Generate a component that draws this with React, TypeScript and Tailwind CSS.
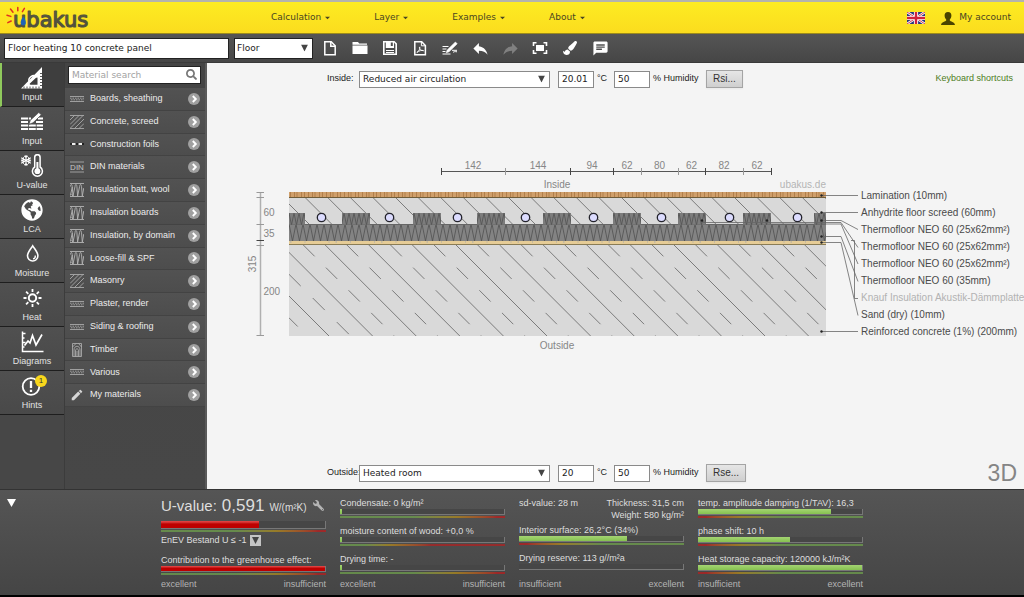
import React from "react";
import { FaGlobeAmericas, FaPaintBrush, FaSearch, FaWrench } from "react-icons/fa";
import { MdChat, MdEdit, MdReply } from "react-icons/md";

const verdana = "font-['DejaVu_Sans',Verdana,sans-serif]";

/* ---------- Header ---------- */

function Logo() {
  return (
    <svg viewBox="0 0 86 26" className="h-[26px] w-[86px]" role="img" aria-label="ubakus">
      <g stroke="#e03020" strokeWidth="1.5" strokeLinecap="round">
        <path d="M1 10.200 4.800 11.400M4.500 4 7 7.200M11.800 2.400v3.400M18.400 3.400 16.400 6.600M1.800 17.600l3.400-1.600" />
      </g>
      <defs>
        <linearGradient id="logoFill" x1="0" y1="0" x2="0" y2="1">
          <stop offset="0" stopColor="#6b6a45" />
          <stop offset="1" stopColor="#3f3f3a" />
        </linearGradient>
      </defs>
      <text
        x="7"
        y="21.500"
        fontFamily="DejaVu Sans"
        fontSize="21"
        fill="url(#logoFill)"
        stroke="#55543c"
        strokeWidth="1.200"
        strokeLinejoin="round"
      >
        ubakus
      </text>
      <path d="M17.400 11.600c-3.600 4.200-3.800 9 .2 9 3.400-.6 2.600-4.800-.2-9z" fill="#1f63b5" />
    </svg>
  );
}

function Flag() {
  return (
    <svg viewBox="0 0 60 40" className="h-3 w-[18px]" aria-hidden="true">
      <path fill="#26377d" d="M0 0h60v40H0z" />
      <path d="M0 0l60 40M60 0L0 40" stroke="#fff" strokeWidth="8" />
      <path d="M0 0l60 40M60 0L0 40" stroke="#c8203c" strokeWidth="3" />
      <path d="M30 0v40M0 20h60" stroke="#fff" strokeWidth="14" />
      <path d="M30 0v40M0 20h60" stroke="#d0223c" strokeWidth="8" />
    </svg>
  );
}

function Header() {
  return (
    <header
      className={`flex h-[34px] items-center border-t-2 border-b border-t-[#b4b4ac] border-b-[#9c8a1c] bg-linear-to-b from-[#fdec22] to-[#fbdc1e] pt-px pr-[13px] text-[9px] text-[#4a4520] ${verdana}`}
    >
      <a href="#home" className="ml-1.5">
        <Logo />
      </a>
      <nav className="ml-[179px] flex gap-11">
        {["Calculation", "Layer", "Examples", "About"].map((item) => (
          <a key={item} href={`#${item.toLowerCase()}`} className="flex items-center gap-1">
            {item}
            <svg viewBox="0 0 6 4" className="h-1 w-[5px]" aria-hidden="true">
              <path d="M0 .4h6L3 3.600z" fill="currentColor" />
            </svg>
          </a>
        ))}
      </nav>
      <a href="#language" aria-label="English" className="ml-auto">
        <Flag />
      </a>
      <a href="#account" className="ml-4 flex items-center gap-1">
        <svg viewBox="0 0 14 13" className="h-[13px] w-3.5" aria-hidden="true">
          <path
            d="M7 0c2.300 0 3.600 1.500 3.400 3.700-.1 1.700-.8 2.900-1.600 3.700v1.100c.4 1 4.900 1.200 5.200 4.500H0c.3-3.300 4.800-3.500 5.200-4.500V7.400C4.400 6.600 3.700 5.400 3.600 3.700 3.400 1.500 4.700 0 7 0z"
            fill="#4a4300"
          />
        </svg>
        My account
      </a>
    </header>
  );
}

/* ---------- Toolbar ---------- */

const tools: { name: string; icon: React.ReactNode }[] = [
  {
    name: "New",
    icon: (
      <svg viewBox="0 0 16 16" className="size-4" fill="none" stroke="currentColor" strokeWidth="1.5">
        <path d="M2.800 1.800h6.400l4 4v8.900H2.800z" />
        <path d="M8.800 2v4.200h4.200" />
      </svg>
    ),
  },
  {
    name: "Open",
    icon: (
      <svg viewBox="0 0 16 16" className="size-4" fill="currentColor">
        <path d="M.5 2h5.500l1.200 1.400H15v1.300H.5zM.5 5.600h15V14H.5z" />
      </svg>
    ),
  },
  {
    name: "Save",
    icon: (
      <svg viewBox="0 0 16 16" className="size-4">
        <path
          fill="currentColor"
          fillRule="evenodd"
          d="M1 1h11.500L15 3.500V15H1zM2.600 2.600v10.800h10.800V4.200L12 2.600V8H3.800V2.600zM4 10h8v1H4zm0 2h8v1H4zM8.800 2.400V6h2V2.400z"
        />
      </svg>
    ),
  },
  {
    name: "PDF",
    icon: (
      <svg viewBox="0 0 16 16" className="size-4" fill="none" stroke="currentColor">
        <path d="M2.800 1.800h6.900l3.700 3.700v9.200H2.800z" strokeWidth="1.500" />
        <path d="M9.400 2v3.800h3.800" />
        <path d="M4.800 12.500c2-1 3.600-4 3-5.600-1.300 1 .8 4 3.800 3.800-1.500-.9-4.800.1-6.800 1.800z" strokeWidth=".9" />
      </svg>
    ),
  },
  {
    name: "Edit layers",
    icon: (
      <svg viewBox="0 0 16 16" className="size-4" stroke="currentColor">
        <path d="M.5 6.500h6M.5 9h4M.5 11.500h3M.5 14h8M11 12.500c1-1 2-1 4-.7M10 10.300h5" strokeWidth="1" fill="none" />
        <path d="M13.400 2l1.800 1.800-8.200 8-2.800 1 1-2.800z" fill="currentColor" strokeWidth=".6" />
      </svg>
    ),
  },
  { name: "Undo", icon: <MdReply className="size-[19px]" /> },
  { name: "Redo", icon: <MdReply className="size-[19px] -scale-x-100 text-[#808080]" /> },
  {
    name: "Fit to screen",
    icon: (
      <svg viewBox="0 0 16 16" className="size-4">
        <path d="M4 5h8v6H4z" fill="currentColor" />
        <path d="M1.500 6V2.700h3M11.500 2.700h3V6M14.500 10v3.300h-3M4.500 13.300h-3V10" fill="none" stroke="currentColor" strokeWidth="1.600" />
      </svg>
    ),
  },
  {
    name: "Appearance",
    icon: <FaPaintBrush className="size-3.5" />,
  },
  { name: "Comment", icon: <MdChat className="size-[17px]" /> },
];

function Arrow() {
  return (
    <svg viewBox="0 0 7 7" className="pointer-events-none absolute top-1/2 right-[5px] size-[7px] -translate-y-1/2" aria-hidden="true">
      <path d="M0 0h7L3.500 7z" fill="#444" />
    </svg>
  );
}

function Toolbar() {
  return (
    <div className={`flex h-[29px] items-center border-b border-[#3a3a3a] bg-linear-to-b from-[#555] to-[#464646] pl-1 ${verdana}`}>
      <input
        aria-label="Project name"
        defaultValue="Floor heating 10 concrete panel"
        className="h-[21px] w-[225px] border border-[#222] bg-white px-[3px] text-[9px] text-[#222]"
      />
      <div className="relative ml-[5px]">
        <select
          aria-label="Component type"
          className="block h-[21px] w-[79px] appearance-none border border-[#222] bg-white px-0.5 pt-0.5 text-[9px] text-[#222]"
        >
          <option>Floor</option>
        </select>
        <Arrow />
      </div>
      <div className="ml-0.5 flex text-white">
        {tools.map((t) => (
          <button key={t.name} type="button" aria-label={t.name} className="flex h-6 w-[30px] items-center justify-center">
            {t.icon}
          </button>
        ))}
      </div>
    </div>
  );
}

/* ---------- Section navigation ---------- */

const sections: { name: string; icon: React.ReactNode; badge?: string }[] = [
  {
    name: "Input",
    icon: (
      <svg viewBox="0 0 24 24" className="size-6">
        <path
          fill="#fff"
          fillRule="evenodd"
          d="M22 1v21.500H1zM17.500 12v6.800h-7c-.6 0-1.200-.6-.6-1.200l6.400-6.200c.6-.5 1.200-.1 1.200.6z"
        />
        <path d="M9.500 16.500a4.600 4.600 0 0 1 7.500-5.200" fill="none" stroke="#fff" strokeWidth="1.500" />
        <path d="M4 22.500v-2M7 22.500v-2M10 22.500v-2M13 22.500v-2M16 22.500v-2M19 22.500v-2M22 19.500h-2M22 16.500h-2M22 13.500h-2M22 10.500h-2M22 7.500h-2" stroke="#444" strokeWidth=".9" />
      </svg>
    ),
  },
  {
    name: "Input",
    icon: (
      <svg viewBox="0 0 24 24" className="size-6">
        <path d="M1 8.500h10M18 8.500h5M1 12h7M16 12h7M1 15.500h22M1 19h22" stroke="#fff" strokeWidth="1.900" strokeDasharray="7 .8" />
        <path d="M18.800 2.500l2.500 2.300-8.300 8-4 1.500 1.300-4z" fill="#fff" stroke="#4b4b4b" strokeWidth=".7" />
      </svg>
    ),
  },
  {
    name: "U-value",
    icon: (
      <svg viewBox="0 0 24 24" className="size-6" fill="none" stroke="#fff">
        <path d="M6 1v11M1.200 3.800l9.600 5.400M1.200 9.200l9.600-5.400M4.300 1.800 6 3.500l1.700-1.700M4.300 11.200 6 9.500l1.700 1.700M1.200 6l2 .2.300-3M10.800 7l-2-.3-.3 3M1.200 7l2-.3.300 3M10.800 6l-2 .2-.3-3" strokeWidth="1.100" />
        <path d="M14.700 13V3.400a2.700 2.700 0 0 1 5.400 0V13a5 5 0 1 1-5.400 0z" strokeWidth="1.500" />
        <path d="M17.400 8v9" strokeWidth="2" />
        <circle cx="17.400" cy="17.200" r="2.900" fill="#fff" stroke="none" />
      </svg>
    ),
  },
  { name: "LCA", icon: <FaGlobeAmericas className="size-[22px] text-white" /> },
  {
    name: "Moisture",
    icon: (
      <svg viewBox="0 0 24 24" className="size-6" fill="none" stroke="#fff">
        <path d="M12.700 3.800c-2.500 4-5.200 6.500-5.200 10a5.200 5.200 0 0 0 10.400 0c0-3.500-2.700-6-5.200-10z" strokeWidth="1.600" />
        <path d="M15.300 13.500c.2 2-.8 3.200-2.300 3.400" strokeWidth="1.300" />
      </svg>
    ),
  },
  {
    name: "Heat",
    icon: (
      <svg viewBox="0 0 24 24" className="size-6" fill="none" stroke="#fff" strokeWidth="2">
        <circle cx="12.500" cy="12" r="3.700" />
        <path d="M12.500 3v3M12.500 18v3M3.500 12h3M18.500 12h3M6.100 5.600l2.200 2.200M16.700 16.200l2.200 2.200M6.100 18.400l2.200-2.200M16.700 7.800l2.200-2.200" strokeWidth="1.800" />
      </svg>
    ),
  },
  {
    name: "Diagrams",
    icon: (
      <svg viewBox="0 0 24 24" className="size-6" fill="none" stroke="#fff">
        <path d="M2.500 1.500v20h21M2.500 3.500h3M2.500 8h2M2.500 12.500h3M2.500 17h2" strokeWidth="1.500" />
        <path d="M4.500 15.500 8 11l2 2 2.500-7.500 3.500 9.500 6-10.500" strokeWidth="1.700" />
      </svg>
    ),
  },
  {
    name: "Hints",
    badge: "1",
    icon: (
      <svg viewBox="0 0 24 24" className="size-6" fill="none" stroke="#fff">
        <circle cx="11" cy="12.500" r="8.300" strokeWidth="1.800" />
        <path d="M11 7v7M11 15.800v2.200" strokeWidth="2.300" />
      </svg>
    ),
  },
];

function SectionNav() {
  return (
    <nav className="w-16 shrink-0 bg-[#474747]">
      {sections.map((s, i) => (
        <a
          key={i}
          href={`#section-${i}`}
          className={`flex h-11 flex-col items-center border-b border-[#1e1e1e] pt-0.5 text-[9px] leading-3 text-[#e2e2e2] ${
            i === 0 ? "border-l-2 border-l-[#8fc95c] bg-[#3e3e3e] pr-0.5" : "bg-linear-to-b from-[#505050] to-[#494949]"
          }`}
        >
          <span className="relative flex h-[26px] items-center">
            {s.icon}
            {s.badge && (
              <span className="absolute top-0.5 -right-[3px] flex size-3 items-center justify-center rounded-full bg-[#f8d71c] text-[8px] leading-none text-[#333]">
                {s.badge}
              </span>
            )}
          </span>
          {s.name}
        </a>
      ))}
    </nav>
  );
}

/* ---------- Material list ---------- */

type Swatch = "board" | "hatch" | "foil" | "din" | "wool" | "timber" | "pencil";

const materials: [string, Swatch][] = [
  ["Boards, sheathing", "board"],
  ["Concrete, screed", "hatch"],
  ["Construction foils", "foil"],
  ["DIN materials", "din"],
  ["Insulation batt, wool", "wool"],
  ["Insulation boards", "wool"],
  ["Insulation, by domain", "wool"],
  ["Loose-fill & SPF", "wool"],
  ["Masonry", "hatch"],
  ["Plaster, render", "board"],
  ["Siding & roofing", "board"],
  ["Timber", "timber"],
  ["Various", "board"],
  ["My materials", "pencil"],
];

function MaterialIcon({ kind }: { kind: Swatch }) {
  if (kind === "pencil") return <MdEdit className="size-3.5 text-[#d5d5d5]" />;
  return (
    <svg viewBox="0 0 14 14" className="size-3.5" fill="none" stroke="#b4b4b4" strokeWidth=".8" aria-hidden="true">
      {kind === "board" && (
        <>
          <path d="M0 4.500h14M0 9.500h14" />
          <path d="M0 6.200h14M1 7.800h13" strokeDasharray="1.500 1" />
        </>
      )}
      {kind === "hatch" && <path d="M0 .5h14M0 13.500h14M0 5l4.500-4.500M0 9.500l9-9M0 13.500l13-13M4.500 13.500l9.500-9.500M9 13.500l5-5" />}
      {kind === "foil" && (
        <>
          <path d="M0 7h14" stroke="#222" strokeWidth="2" />
          <path d="M2 7h3.500M8.500 7h3.500" stroke="#eee" strokeWidth="2" />
        </>
      )}
      {kind === "din" && (
        <>
          <path d="M0 2h14M0 12h14" />
          <text x="7" y="10.300" textAnchor="middle" fontFamily="Liberation Sans" fontSize="8" fill="#c4c4c4" stroke="none">
            DIN
          </text>
        </>
      )}
      {kind === "wool" && (
        <path
          d="M0 .5h14M0 13.500h14M.4 3.500C.6.800 2 .8 2.200 3.500L3 13l2-9.500c.3-2.700 1.600-2.700 1.900 0L7.600 13l2-9.500c.3-2.700 1.600-2.700 1.900 0l.8 9.500 1.500-8M.4 12.500 2.300 4M3 13 1.600 11"
          strokeWidth=".9"
        />
      )}
      {kind === "timber" && (
        <path d="M2.500.5h9v13h-9zM4 13.500V7c0-5 6-5 6 0v6.500M5.500 13.500V8c0-3 3-3 3 0v5.500M7 8v5.500M2.500 4 6 .5M8.500.5l3 3.500" />
      )}
    </svg>
  );
}

function MaterialList() {
  return (
    <aside className="flex w-[143px] shrink-0 flex-col border-r-2 border-l border-r-[#5a5a5a] border-l-[#3c3c3c] bg-linear-to-b from-[#444] to-[#474747]">
      <div className="relative mt-[3px] mr-1 mb-1 ml-[3px]">
        <input
          type="search"
          aria-label="Material search"
          placeholder="Material search"
          className={`block h-[18px] w-full border border-[#222] bg-white px-[3px] text-[9px] placeholder:text-[#a2a2a2] ${verdana}`}
        />
        <FaSearch className="absolute top-[3px] right-1 size-[11px] text-[#777]" />
      </div>
      <ul className="grid h-[319px] auto-rows-fr">
        {materials.map(([name, kind]) => (
          <li key={name} className="border-b border-[#434343] bg-linear-to-b from-[#525252] to-[#4d4d4d]">
            <a href={`#${name}`} className="flex h-full items-center px-[5px] text-[9px] text-[#ececec]">
              <MaterialIcon kind={kind} />
              <span className="ml-1.5 flex-1">{name}</span>
              <svg viewBox="0 0 12 12" className="size-3" aria-hidden="true">
                <circle cx="6" cy="6" r="6" fill="#a0a0a0" />
                <path d="M4.800 3l3 3-3 3" fill="none" stroke="#fff" strokeWidth="1.900" />
              </svg>
            </a>
          </li>
        ))}
      </ul>
    </aside>
  );
}

/* ---------- Drawing ---------- */

const blocks: [number, number][] = [
  [289, 16], [342, 28], [413, 28], [477, 28], [543, 28], [613, 28], [678, 28], [743, 28], [814, 12],
];
const pipes = [321.500, 389.500, 457.500, 525.500, 593.500, 661.500, 729.500, 797.500];
const topTicks = [441.500, 505.500, 570.500, 613.500, 641.500, 678.500, 705.500, 743.500, 771.500];
const topLabels: [number, string][] = [
  [473, "142"], [538, "144"], [592, "94"], [627, "62"], [659.500, "80"], [691.500, "62"], [724, "82"], [757, "62"],
];
const layerLabels = [
  "Lamination (10mm)",
  "Anhydrite floor screed (60mm)",
  "Thermofloor NEO 60 (25x62mm²)",
  "Thermofloor NEO 60 (25x62mm²)",
  "Thermofloor NEO 60 (25x62mm²)",
  "Thermofloor NEO 60 (35mm)",
  "Knauf Insulation Akustik-Dämmplatte",
  "Sand (dry) (10mm)",
  "Reinforced concrete (1%) (200mm)",
];
const screedLines = Array.from({ length: 25 }, (_, i) => 282.500 + i * 22.600);
const concreteLines = Array.from({ length: 15 }, (_, i) => 194.400 + i * 43.600);
const concreteDashes = Array.from({ length: 12 }, (_, i) => 303.300 + i * 43.600);

function SectionDrawing() {
  return (
    <svg viewBox="207 150 817 210" className="block w-full" fontFamily="Liberation Sans, Arial, sans-serif" fontSize="10">
      <defs>
        <clipPath id="clipScreed"><path d="M289 199h537v27H289z" /></clipPath>
        <clipPath id="clipConcrete"><path d="M289 246h537v91H289z" /></clipPath>
        <pattern id="wood" x="289" y="193" width="18" height="6" patternUnits="userSpaceOnUse">
          <path d="M0 0h18v6H0z" fill="#cf9f6b" />
          <path d="M1.500 0v6M5.500 0v6M8 0v6M12.500 0v6M15.500 0v6" stroke="#a5713d" strokeWidth=".7" />
        </pattern>
        <pattern id="wool" x="289" y="225" width="7" height="17" patternUnits="userSpaceOnUse">
          <path d="M0 0h7v17H0z" fill="#838383" />
          <path d="M0 0 3.500 17 7 0" fill="none" stroke="#505050" strokeWidth=".8" />
        </pattern>
        <pattern id="woolSmall" x="289" y="214" width="5" height="12" patternUnits="userSpaceOnUse">
          <path d="M0 0h5v12H0z" fill="#7c7c7c" />
          <path d="M0 0l2.500 12L5 0" fill="none" stroke="#505050" strokeWidth=".8" />
        </pattern>
      </defs>

      <g fill="#868686">
        <path d="M441 172.500h331" stroke="#555" />
        {topTicks.map((x, i) => (
          <path key={x} d={`M${x} 169v7`} stroke={[1, 4, 5, 7].includes(i) ? "#999" : "#444"} />
        ))}
        {topLabels.map(([x, t]) => (
          <text key={x} x={x} y="169.500" textAnchor="middle">{t}</text>
        ))}
        <text x="557" y="188.500" textAnchor="middle">Inside</text>
        <text x="826" y="188.500" textAnchor="end" fill="#b4b4b4">ubakus.de</text>
        <text x="557" y="350" textAnchor="middle">Outside</text>
        <path d="M260.500 193.500v143" stroke="#b0b0b0" strokeWidth="1.500" />
        <path d="M256.500 193.500h7.500M256.500 198.500h7.500M256.500 225.500h7.500M256.500 246.500h7.500M256.500 336.500h7.500" stroke="#999" />
        <path d="M256.500 241.500h7.500" stroke="#444" />
        <text x="263.500" y="216.500">60</text>
        <text x="263.500" y="238">35</text>
        <text x="263.500" y="295.500">200</text>
        <text transform="translate(255.500 265) rotate(-90)" textAnchor="middle">315</text>
      </g>

      <path d="M289 199h537v27H289z" fill="#d9d9d9" />
      <g clipPath="url(#clipScreed)" stroke="#707070" strokeWidth=".9">
        {screedLines.map((x) => (
          <path key={x} d={`M${x} 198.500l28 28`} />
        ))}
      </g>
      <path d="M289 193h537v6H289z" fill="url(#wood)" />
      <path d="M289 198.500h537" stroke="#6e5c3a" />
      <path d="M289 225h537v17H289z" fill="url(#wool)" />
      <path d="M289 225.500h537" stroke="#666" />
      {blocks.map(([x, w]) => (
        <rect key={x} x={x} y="214" width={w} height="11.500" fill="url(#woolSmall)" />
      ))}
      {pipes.map((x) => (
        <circle key={x} cx={x} cy="218.500" r="4.200" fill="#dcdcff" stroke="#23232b" strokeWidth="1.300" />
      ))}
      <path d="M289 242h537v4H289z" fill="#e6cc96" />
      <path d="M290 243h536" stroke="#a9a9a9" strokeDasharray="1.500 13 1 23 1 6" />
      <path d="M289 246h537v91H289z" fill="#d9d9d9" />
      <path d="M289 245.500h537" stroke="#8a7c55" />
      <g clipPath="url(#clipConcrete)" stroke="#707070" strokeWidth=".9">
        {concreteLines.map((x) => (
          <path key={x} d={`M${x} 246l91 91`} />
        ))}
        {concreteDashes.map((x) => (
          <path key={x} d={`M${x} 246l91 91`} strokeDasharray="16 16" />
        ))}
        <path d="M288.700 275l62 62" strokeDasharray="17 17" />
        <path d="M288.700 318.500l9 9" />
      </g>

      <g fill="none" stroke="#666" strokeWidth=".8">
        <path d="M821 196.500h37M821 213.500h37M821 221.500h20l17 9M702 223.500h139l17 25M767 221.500l4 3.500h70l17 40M821 237.500h20l17 45M821 243.500h20l17 73M821 332.500h37M702 221.500l3 2" />
        <path d="M851 241.500h3.500v58h3.500" />
      </g>
      <g fill="#222">
        {[196.500, 213.500, 221.500, 237.500, 243.500, 332.500].map((y) => (
          <circle key={y} cx="821.500" cy={y} r="1.200" />
        ))}
        <circle cx="702" cy="221.500" r="1.200" />
        <circle cx="767" cy="221.500" r="1.200" />
      </g>
      {layerLabels.map((label, i) => (
        <text key={i} x="861" y={200 + i * 17} fill={i === 6 ? "#b2b2b2" : "#4a4a4a"}>{label}</text>
      ))}
    </svg>
  );
}

/* ---------- Canvas ---------- */

function Climate(props: { id: string; label: string; room: string; temp: string; button: string; children: React.ReactNode }) {
  const field = `h-[17px] border border-[#8a8a8a] bg-white px-[3px] text-[9px] text-[#222] ${verdana}`;
  return (
    <div className="flex h-5 items-center pr-[11px] pl-[120px] text-[9px] whitespace-nowrap text-[#222]">
      <label htmlFor={props.id} className="w-8">{props.label}</label>
      <div className="relative">
        <select id={props.id} className={`block w-[191px] appearance-none pt-px ${field}`}>
          <option>{props.room}</option>
        </select>
        <Arrow />
      </div>
      <input id={`${props.id}-t`} defaultValue={props.temp} className={`ml-2 w-9 ${field}`} />
      <label htmlFor={`${props.id}-t`} className="w-5 pl-[3px]">°C</label>
      <input id={`${props.id}-h`} defaultValue="50" className={`w-9 ${field}`} />
      <label htmlFor={`${props.id}-h`} className="w-14 pl-[3px]">% Humidity</label>
      <button
        type="button"
        className="h-[18px] border border-[#a4a4a4] bg-linear-to-b from-[#e6e6e6] to-[#cfcfcf] px-1.5 text-[10px] leading-3 text-[#333] shadow-xs"
      >
        {props.button}
      </button>
      {props.children}
    </div>
  );
}

function Canvas() {
  return (
    <main className="flex min-w-0 flex-1 flex-col justify-between bg-[#f4f4f4] pt-1.5 pb-1.5">
      <Climate id="inside" label="Inside:" room="Reduced air circulation" temp="20.01" button="Rsi...">
        <a href="#shortcuts" className="ml-auto text-[#4d7d22]">Keyboard shortcuts</a>
      </Climate>
      <div className="-mt-11">
        <SectionDrawing />
      </div>
      <Climate id="outside" label="Outside:" room="Heated room" temp="20" button="Rse...">
        <button type="button" className="-mr-1 ml-auto text-[23px] leading-none text-[#858585]">3D</button>
      </Climate>
    </main>
  );
}

/* ---------- Results ---------- */

const goodToBad = "bg-linear-to-r from-[#6c9a4c] from-45% via-[#a8861e] via-70% to-[#b02020] to-95%";
const quickBad = "bg-linear-to-r from-[#6c9a4c] from-15% via-[#a8861e] via-30% to-[#a82424] to-55%";
const badToGood = "bg-linear-to-r from-[#b02020] from-5% via-[#a8861e] via-25% to-[#6c9a4c] to-50%";

function Meter({ label, value, color, scale, big }: { label: string; value: number; color: string; scale?: string; big?: boolean }) {
  return (
    <div role="meter" aria-label={label} aria-valuenow={value} className={big ? "h-[11px]" : "h-[9px]"}>
      <div className={`border-r border-b border-[#777] bg-[#464646] ${big ? "h-2" : "h-1.5"}`}>
        <div className={`${big ? "h-[7px]" : "h-[5px]"} ${color}`} style={{ width: `${value}%` }} />
      </div>
      {scale && <div className={`mt-px h-0.5 opacity-80 ${scale}`} />}
    </div>
  );
}

const green = "bg-linear-to-b from-[#a4d472] to-[#86c150]";
const red = "bg-linear-to-b from-[#e04040] from-10% to-[#be0000] to-40%";

function Item({ text, value, color, scale }: { text: string; value: number; color: string; scale?: string }) {
  return (
    <div>
      <p>{text}</p>
      <Meter label={text} value={value} color={color} scale={scale} />
    </div>
  );
}

function Ends({ left, right }: { left: string; right: string }) {
  return (
    <div className="mt-auto flex justify-between text-[#b4b4b4]">
      <span>{left}</span>
      <span>{right}</span>
    </div>
  );
}

function Results() {
  const column = "flex w-[165px] shrink-0 flex-col";
  return (
    <footer className="flex border-t border-b-2 border-t-[#333] border-b-black bg-linear-to-b from-[#555] to-[#454545] pt-[7px] pb-[5px] text-[9px] leading-3 whitespace-nowrap text-[#dedede]">
      <div className="w-[161px] shrink-0 pt-0.5 pl-[7px]">
        <button type="button" aria-label="Collapse" className="block">
          <svg viewBox="0 0 9 8" className="h-2 w-[9px]">
            <path d="M0 0h9L4.500 8z" fill="#fff" />
          </svg>
        </button>
      </div>
      <div className="flex gap-3.5">
        <section className={column}>
          <div className="flex items-baseline leading-[18px]">
            <span className="text-[15px]">U-value:</span>
            <span className="ml-[5px] text-[17px]">0,591</span>
            <span className="ml-[5px] text-[10px]">W/(m²K)</span>
            <FaWrench className="ml-auto mr-0.5 size-[11px] -scale-x-100 text-[#b4b4b4]" />
          </div>
          <div className="mt-1">
            <Meter label="U-value" value={60} color={red} scale={goodToBad} big />
          </div>
          <div className="mt-0.5 flex items-center gap-1">
            EnEV Bestand U ≤ -1
            <button type="button" aria-label="Choose requirement" className="flex size-[11px] items-center justify-center bg-[#c4c4c4]">
              <svg viewBox="0 0 7 7" className="size-[7px]">
                <path d="M0 0h7L3.500 7z" fill="#444" />
              </svg>
            </button>
          </div>
          <div className="mt-2">
            <Item text="Contribution to the greenhouse effect:" value={100} color={red} scale={goodToBad} />
          </div>
          <Ends left="excellent" right="insufficient" />
        </section>

        <section className={column}>
          <div className="mb-1 flex flex-col gap-[7px]">
            <Item text="Condensate: 0 kg/m²" value={1} color={green} scale={goodToBad} />
            <Item text="moisture content of wood: +0,0 %" value={1} color={green} scale={quickBad} />
            <Item text="Drying time: -" value={1} color={green} scale={goodToBad} />
          </div>
          <Ends left="excellent" right="insufficient" />
        </section>

        <section className={column}>
          <div className="flex justify-between">
            <span>sd-value: 28 m</span>
            <span className="text-right">
              Thickness: 31,5 cm
              <br />
              Weight: 580 kg/m²
            </span>
          </div>
          <div className="mt-[3px] flex flex-col gap-[7px]">
            <Item text="Interior surface: 26,2°C (34%)" value={66} color={green} scale={badToGood} />
            <Item text="Drying reserve: 113 g//m²a" value={0} color={green} />
          </div>
          <Ends left="insufficient" right="excellent" />
        </section>

        <section className={column}>
          <div className="mb-1 flex flex-col gap-[7px]">
            <Item text="temp. amplitude damping (1/TAV): 16,3" value={81} color={green} scale={badToGood} />
            <Item text="phase shift: 10 h" value={56} color={green} scale={badToGood} />
            <Item text="Heat storage capacity: 120000 kJ/m²K" value={100} color={green} scale={badToGood} />
          </div>
          <Ends left="insufficient" right="excellent" />
        </section>
      </div>
    </footer>
  );
}

export default function App() {
  return (
    <div className="flex min-h-screen flex-col overflow-x-hidden bg-[#474747] font-['Liberation_Sans',Arial,sans-serif]">
      <Header />
      <Toolbar />
      <div className="flex flex-1">
        <SectionNav />
        <MaterialList />
        <Canvas />
      </div>
      <Results />
    </div>
  );
}
